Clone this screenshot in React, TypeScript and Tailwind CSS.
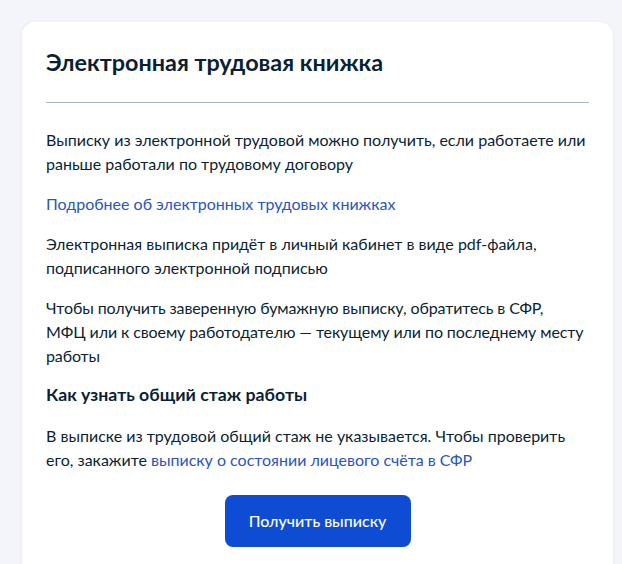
// Карточка «Электронная трудовая книжка» (Госуслуги)

const LINK = "text-[#2a55bf] hover:text-[#0d4cd3]";

export default function App() {
  return (
    <div
      className="min-h-[564px] bg-[#f3f5fa] pt-[22px] pl-[22px] text-[#0b1f33]"
      style={{ fontFamily: "Lato, 'Open Sans', sans-serif" }}
    >
      <section className="w-[591px] min-h-[560px] rounded-t-[14px] bg-white px-[24px] pt-[24px] pb-8 shadow-[0_1px_4px_rgba(11,31,51,0.06)]">
        <h1 className="text-[23.4px] leading-[32px] font-bold">
          Электронная трудовая книжка
        </h1>
        <div className="mt-[24px] h-px bg-[#a9b7bf]" />

        <div className="mt-[25px] flex flex-col gap-4 text-[16px] leading-6">
          <p>
            Выписку из электронной трудовой можно получить, если работаете или
            раньше работали по трудовому договору
          </p>
          <p>
            <a href="#" className={LINK}>
              Подробнее об электронных трудовых книжках
            </a>
          </p>
          <p>
            Электронная выписка придёт в личный кабинет в виде pdf-файла,
            подписанного электронной подписью
          </p>
          <p className="whitespace-nowrap tracking-[-0.1px]">
            Чтобы получить заверенную бумажную выписку, обратитесь в СФР,
            <br />
            МФЦ или к своему работодателю — текущему или по последнему месту
            <br />
            работы
          </p>
        </div>

        <h2 className="mt-[14px] text-[17.7px] leading-[26px] font-bold">
          Как узнать общий стаж работы
        </h2>
        <p className="mt-4 text-[16px] leading-6">
          В выписке из трудовой общий стаж не указывается. Чтобы проверить
          его, закажите{" "}
          <a href="#" className={LINK}>
            выписку о состоянии лицевого счёта в СФР
          </a>
        </p>

        <div className="mt-[23px] flex justify-center">
          <button className="h-[52px] w-[186px] rounded-[8px] bg-[#0d4cd3] text-[16px] font-medium text-white">
            Получить выписку
          </button>
        </div>
      </section>
    </div>
  );
}
